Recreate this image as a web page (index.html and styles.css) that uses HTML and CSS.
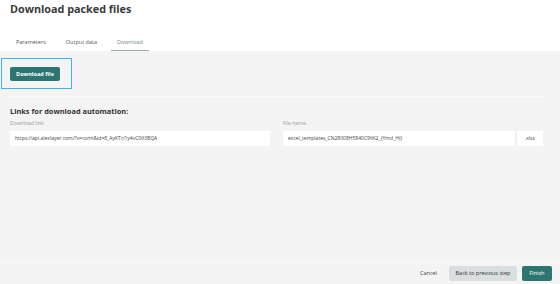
FILE: index.html
```html
<!DOCTYPE html>
<html lang="en">

<head>
  <meta charset="UTF-8">
  <meta name="viewport" content="width=device-width, initial-scale=1.0">
  <title>Download packed files</title>
  <link rel="stylesheet" href="styles.css">
</head>

<body>
  <header class="page-head">
    <h1>Download packed files</h1>
    <nav class="tabs">
      <a class="tab">Parameters</a>
      <a class="tab">Output data</a>
      <a class="tab is-active">Download</a>
    </nav>
  </header>

  <main class="content">
    <div class="download-box">
      <button class="btn btn-primary">Download file</button>
    </div>

    <section class="automation">
      <h2>Links for download automation:</h2>
      <div class="fields">
        <div class="field">
          <label>Download link:</label>
          <div class="input">https://api.alexlayer.com/?s=conn&amp;id=8_AyKTcl1y4vC063BQA</div>
        </div>
        <div class="field">
          <label>File name:</label>
          <div class="input-group">
            <div class="input">excel_templates_CN28008H5840C9662_{Ymd_Hi}</div>
            <span class="addon">.xlsx</span>
          </div>
        </div>
      </div>
    </section>
  </main>

  <footer class="actions">
    <a class="link-cancel">Cancel</a>
    <button class="btn btn-secondary">Back to previous step</button>
    <button class="btn btn-primary btn-finish">Finish</button>
  </footer>
</body>

</html>
```

FILE: styles.css
```css
html {
  box-sizing: border-box;
  font-family: "Open Sans", sans-serif;
}

*,
*::before,
*::after {
  box-sizing: border-box;
}

body {
  margin: 0;
  height: 284px;
  display: flex;
  flex-direction: column;
  background-color: #f4f4f4;
  color: #333;
}

.page-head {
  background-color: #fff;
  padding: 0 10px;
}

.page-head h1 {
  margin: 0;
  font-size: 10.8px;
  line-height: 18px;
  font-weight: 700;
  color: #3a3a3a;
}

.tabs {
  display: flex;
  gap: 8px;
  margin-top: 17px;
}

.tab {
  display: block;
  padding: 0 6px;
  height: 16px;
  line-height: 15px;
  font-size: 5.5px;
  color: #555;
  border-bottom: 1.5px solid transparent;
}

.tab.is-active {
  color: #7a8a8a;
  border-bottom-color: #9fb0b0;
}

.content {
  flex: 1;
  padding: 7px 17px 0 1px;
}

.download-box {
  display: inline-block;
  border: 1px solid #3fb6e3;
  padding: 8px 11px 7px 8px;
}

.btn {
  display: block;
  border: none;
  border-radius: 2px;
  font-family: inherit;
  font-size: 5.5px;
  height: 14px;
  padding: 0;
  white-space: nowrap;
  cursor: pointer;
}

.btn-primary {
  background-color: #2e7571;
  color: #fff;
  font-weight: 700;
  width: 50px;
}

.btn-secondary {
  background-color: #d9dee1;
  color: #333;
  width: 68px;
  height: 15px;
}

.automation {
  margin: 7px 0 0 9px;
  border-top: 1px solid #fbfbfb;
  padding-top: 9px;
}

.automation h2 {
  margin: 0;
  font-size: 7.4px;
  line-height: 10px;
  font-weight: 700;
  color: #333;
}

.fields {
  display: grid;
  grid-template-columns: 260px 260px;
  gap: 13px;
  margin-top: 1px;
}

.field label {
  display: block;
  font-size: 5px;
  line-height: 13px;
  padding-bottom: 1px;
  color: #9a9a9a;
}

.input {
  flex: 1;
  height: 15px;
  line-height: 15px;
  padding: 0 5px;
  background-color: #fff;
  font-size: 5px;
  color: #444;
  white-space: nowrap;
  overflow: hidden;
}

.input-group {
  display: flex;
  gap: 1px;
}

.input-group .input {
  flex: 0 0 232px;
}

.addon {
  flex: 1;
  height: 15px;
  line-height: 15px;
  text-align: center;
  background-color: #fff;
  border-left: 1px solid #eee;
  font-size: 5px;
  color: #444;
}

.actions {
  display: flex;
  justify-content: flex-end;
  align-items: center;
  gap: 5px;
  height: 22px;
  padding: 0 8px 1px 0;
  border-top: 1px solid #fbfbfb;
}

.link-cancel {
  font-size: 5.5px;
  color: #444;
  margin-right: 7px;
}

.btn-finish {
  width: 30px;
  height: 15px;
  font-weight: 400;
}
```
